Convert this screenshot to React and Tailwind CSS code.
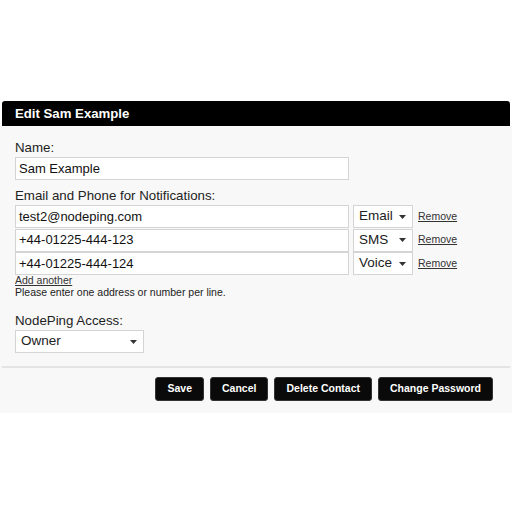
import React from "react";

function Caret() {
  return (
    <svg width="7" height="4" viewBox="0 0 7 4" className="shrink-0">
      <path d="M0 0H7L3.5 4Z" fill="#333" />
    </svg>
  );
}

function Select({ label, w }) {
  return (
    <div className={`flex items-center justify-between h-[23px] bg-white border border-[#d4d4d4] pl-[5px] pr-[6px] text-[13.5px] text-[#222] ${w}`}>
      <span>{label}</span>
      <Caret />
    </div>
  );
}

function Input({ value, w }) {
  return (
    <div className={`flex items-center h-[23px] bg-white border border-[#d4d4d4] px-[3px] text-[13px] text-[#111] ${w}`}>
      {value}
    </div>
  );
}

function Btn({ children }) {
  return (
    <div className="h-[24px] px-[11px] flex items-center bg-[#0a0a0a] rounded-[3px] text-white text-[10.5px] font-bold border border-[#333]">
      {children}
    </div>
  );
}

export default function App() {
  const rows = [
    ["test2@nodeping.com", "Email"],
    ["+44-01225-444-123", "SMS"],
    ["+44-01225-444-124", "Voice"],
  ];
  return (
    <div className="w-[512px] h-[512px] bg-white pt-[101px]" style={{ fontFamily: '"Liberation Sans", Arial, sans-serif' }}>
      <div className="mx-[2px] h-[25px] bg-black rounded-t-[3px] flex items-center pl-[13px] text-white text-[13.2px] font-bold">
        Edit Sam Example
      </div>
      <div className="bg-[#f8f8f8] h-[287px]">
        <div className="px-[15px] pt-[13px]">
          <div className="text-[13.3px] text-[#222] leading-[18px]">Name:</div>
          <Input value="Sam Example" w="w-[334px]" />
          <div className="text-[13.3px] text-[#222] leading-[18px] mt-[7px]">Email and Phone for Notifications:</div>
          <div className="flex flex-col gap-[0.5px]">
            {rows.map(([v, t]) => (
              <div key={v} className="flex items-center">
                <Input value={v} w="w-[334px]" />
                <div className="ml-[4px]">
                  <Select label={t} w="w-[60px]" />
                </div>
                <span className="ml-[5px] text-[10.5px] text-[#333] underline">Remove</span>
              </div>
            ))}
          </div>
          <div className="text-[10.5px] text-[#333] underline leading-[12px] -mt-[1px]">Add another</div>
          <div className="text-[10.5px] text-[#222] leading-[12px]">Please enter one address or number per line.</div>
          <div className="text-[13.3px] text-[#222] leading-[18px] mt-[14px]">NodePing Access:</div>
          <Select label="Owner" w="w-[129px]" />
        </div>
        <div className="mx-[2px] mt-[13px] h-[2px] bg-[#e4e4e4]" />
        <div className="flex justify-end gap-[6px] pr-[19px] mt-[9px]">
          <Btn>Save</Btn>
          <Btn>Cancel</Btn>
          <Btn>Delete Contact</Btn>
          <Btn>Change Password</Btn>
        </div>
      </div>
    </div>
  );
}
